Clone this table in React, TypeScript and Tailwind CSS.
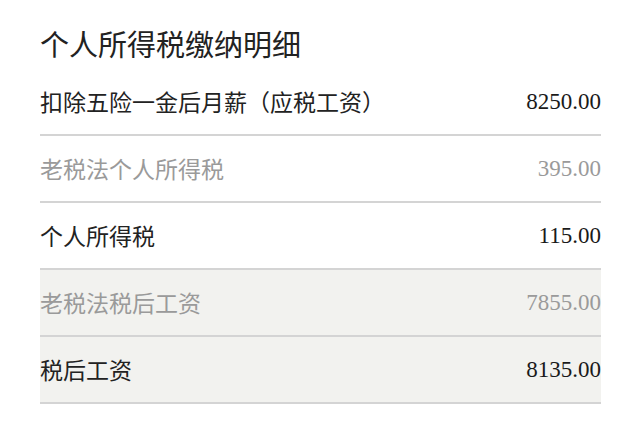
import React from 'react';

interface Row {
    label: string;
    value: string;
    muted?: boolean;
    shaded?: boolean;
}

const rows: Row[] = [
    { label: '扣除五险一金后月薪（应税工资）', value: '8250.00' },
    { label: '老税法个人所得税', value: '395.00', muted: true },
    { label: '个人所得税', value: '115.00' },
    { label: '老税法税后工资', value: '7855.00', muted: true, shaded: true },
    { label: '税后工资', value: '8135.00', shaded: true },
];

export default function App() {
    return (
        <div className="w-[640px] h-[422px] bg-white px-10 font-['Noto_Sans_CJK_SC',sans-serif] overflow-hidden">
            {/* 标题 */}
            <div className="h-[69px] pt-[27px]">
                <h1 className="text-[29px] leading-[32px] text-[#222] font-normal">个人所得税缴纳明细</h1>
            </div>

            {/* 明细列表 */}
            <div className="w-[561px]">
                {rows.map((row) => (
                    <div
                        key={row.label}
                        className={`h-[67px] flex items-center justify-between border-b-2 border-[#d4d4d4] ${row.shaded ? 'bg-[#f2f2ef]' : 'bg-white'}`}
                    >
                        <span className={`text-[23px] leading-none ${row.muted ? 'text-[#9a9a9a]' : 'text-[#222]'}`}>
                            {row.label}
                        </span>
                        <span
                            className={`text-[23px] leading-none font-['Liberation_Serif',serif] ${row.muted ? 'text-[#9a9a9a]' : 'text-[#1a1a1a]'}`}
                        >
                            {row.value}
                        </span>
                    </div>
                ))}
            </div>
        </div>
    );
}
